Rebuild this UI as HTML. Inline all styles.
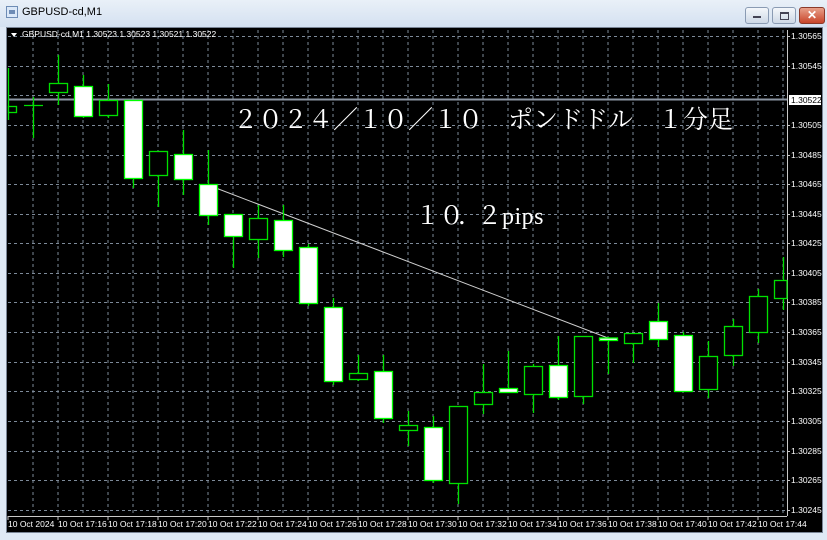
<!DOCTYPE html>
<html><head><meta charset="utf-8"><style>
body{margin:0;width:827px;height:540px;overflow:hidden;background:#dfe9f5;font-family:"Liberation Sans",sans-serif}
.t{position:absolute;left:0;top:0;width:827px;height:27px;background:linear-gradient(#e9f0f8,#d4e1f1)}
.btn{position:absolute;top:7px;height:15px;border:1px solid #8a9bb3;border-radius:3px;background:linear-gradient(#f4f7fb,#cdd8e6)}
</style></head><body>
<div class="t">
<svg style="position:absolute;left:6px;top:6px" width="12" height="12"><rect x="0.5" y="0.5" width="11" height="11" fill="#dbe8f8" stroke="#6e8cb5"/><rect x="3" y="4" width="6" height="4" fill="#6e8cb5"/></svg>
<div style="position:absolute;left:22px;top:6px;font-size:11px;color:#000">GBPUSD-cd,M1</div>
<div class="btn" style="left:745px;width:22px"><div style="position:absolute;left:7px;top:8px;width:8px;height:2px;background:#445"></div></div>
<div class="btn" style="left:772px;width:22px"><div style="position:absolute;left:7px;top:4px;width:7px;height:5px;border:1px solid #445;border-top-width:2px"></div></div>
<div class="btn" style="left:799px;width:24px;background:linear-gradient(#e8a08a,#c8452a);border-color:#8b3a2a"><div style="position:absolute;left:7px;top:0px;color:#fff;font-size:12px;font-weight:bold">✕</div></div>
</div>
<svg style="position:absolute;left:0;top:0" width="827" height="540" font-family="Liberation Sans, sans-serif">
<rect x="6" y="27" width="817" height="506" fill="#000"/>
<rect x="6.5" y="27.5" width="816" height="505" fill="none" stroke="#7a8596"/>
<g stroke="#7d8a99" stroke-width="1" stroke-dasharray="3,3">
<path d="M33 30V515M58 30V515M83 30V515M108 30V515M133 30V515M158 30V515M183 30V515M208 30V515M233 30V515M258 30V515M283 30V515M308 30V515M333 30V515M358 30V515M383 30V515M408 30V515M433 30V515M458 30V515M483 30V515M508 30V515M533 30V515M558 30V515M583 30V515M608 30V515M633 30V515M658 30V515M683 30V515M708 30V515M733 30V515M758 30V515M783 30V515"/>
<path d="M8 36.5H787M8 66.5H787M8 95.5H787M8 125.5H787M8 155.5H787M8 184.5H787M8 214.5H787M8 243.5H787M8 273.5H787M8 302.5H787M8 332.5H787M8 362.5H787M8 391.5H787M8 421.5H787M8 451.5H787M8 480.5H787M8 510.5H787"/>
</g>
<path d="M8 99.5H787" stroke="#8c96a3" stroke-width="2"/>
<path d="M787.5 30V516M8 516.5H787" stroke="#c8c8c8"/>
<g stroke="#c8c8c8"><path d="M8 516v4M58 516v4M108 516v4M158 516v4M208 516v4M258 516v4M308 516v4M358 516v4M408 516v4M458 516v4M508 516v4M558 516v4M608 516v4M658 516v4M708 516v4M758 516v4M787 36.5h3M787 66.5h3M787 125.5h3M787 155.5h3M787 184.5h3M787 214.5h3M787 243.5h3M787 273.5h3M787 302.5h3M787 332.5h3M787 362.5h3M787 391.5h3M787 421.5h3M787 451.5h3M787 480.5h3M787 510.5h3"/></g>
<line x1="208" y1="185" x2="608" y2="338" stroke="#d0d0d0" stroke-width="1"/>
<g stroke="#00e000" stroke-width="1.3">
<path d="M8.5 68V120M33.5 97V138M58.5 55V105M83.5 75V118M108.5 84V118M133.5 100V188M158.5 151V207M183.5 130V195M208.5 150V225M233.5 214V268M258.5 205V258M283.5 205V257M308.5 244V306M333.5 298V385M358.5 355V381M383.5 355V423M408.5 411V446M433.5 416V483M458.5 406V504M483.5 364V414M508.5 351V392M533.5 364V413M558.5 336V400M583.5 336V404M608.5 337V374M633.5 333V363M658.5 303V347M683.5 332V391M708.5 341V398M733.5 319V366M758.5 289V343M783.5 257V310"/>
<path d="M24 105.5H43"/>
</g>
<g stroke="#00e000" stroke-width="1.3" fill="#000">
<rect x="8.5" y="106.5" width="8" height="6"/>
<rect x="49.5" y="83.5" width="18" height="9"/>
<rect x="99.5" y="100.5" width="18" height="15"/>
<rect x="149.5" y="151.5" width="18" height="24"/>
<rect x="249.5" y="218.5" width="18" height="21"/>
<rect x="349.5" y="373.5" width="18" height="6"/>
<rect x="399.5" y="425.5" width="18" height="5"/>
<rect x="449.5" y="406.5" width="18" height="77"/>
<rect x="474.5" y="392.5" width="18" height="12"/>
<rect x="524.5" y="366.5" width="18" height="28"/>
<rect x="574.5" y="336.5" width="18" height="60"/>
<rect x="624.5" y="333.5" width="18" height="10"/>
<rect x="699.5" y="356.5" width="18" height="33"/>
<rect x="724.5" y="326.5" width="18" height="29"/>
<rect x="749.5" y="296.5" width="18" height="36"/>
<rect x="774.5" y="280.5" width="12.5" height="18"/>
</g>
<g stroke="#00ff00" stroke-width="1.3" fill="#fff">
<rect x="74.5" y="86.5" width="18" height="30"/>
<rect x="124.5" y="100.5" width="18" height="78"/>
<rect x="174.5" y="154.5" width="18" height="25"/>
<rect x="199.5" y="184.5" width="18" height="31"/>
<rect x="224.5" y="214.5" width="18" height="22"/>
<rect x="274.5" y="220.5" width="18" height="30"/>
<rect x="299.5" y="247.5" width="18" height="56"/>
<rect x="324.5" y="307.5" width="18" height="74"/>
<rect x="374.5" y="371.5" width="18" height="47"/>
<rect x="424.5" y="427.5" width="18" height="53"/>
<rect x="499.5" y="388.5" width="18" height="4"/>
<rect x="549.5" y="365.5" width="18" height="32"/>
<rect x="599.5" y="338" width="18" height="2.5"/>
<rect x="649.5" y="321.5" width="18" height="18"/>
<rect x="674.5" y="335.5" width="18" height="56"/>
</g>
<g fill="#fff" font-size="8.5">
<text x="22" y="37">GBPUSD-cd,M1  1.30523 1.30523 1.30521 1.30522</text>
<path d="M11 33h6l-3 4z" fill="#fff"/>
<text x="791" y="39">1.30565</text><text x="791" y="69">1.30545</text><text x="791" y="128">1.30505</text><text x="791" y="158">1.30485</text><text x="791" y="187">1.30465</text><text x="791" y="217">1.30445</text><text x="791" y="246">1.30425</text><text x="791" y="276">1.30405</text><text x="791" y="305">1.30385</text><text x="791" y="335">1.30365</text><text x="791" y="365">1.30345</text><text x="791" y="394">1.30325</text><text x="791" y="424">1.30305</text><text x="791" y="454">1.30285</text><text x="791" y="483">1.30265</text><text x="791" y="513">1.30245</text>
<rect x="789" y="95" width="32" height="10" fill="#fff"/>
<text x="791" y="103" fill="#000">1.30522</text>
<text x="8" y="527">10 Oct 2024</text><text x="58" y="527">10 Oct 17:16</text><text x="108" y="527">10 Oct 17:18</text><text x="158" y="527">10 Oct 17:20</text><text x="208" y="527">10 Oct 17:22</text><text x="258" y="527">10 Oct 17:24</text><text x="308" y="527">10 Oct 17:26</text><text x="358" y="527">10 Oct 17:28</text><text x="408" y="527">10 Oct 17:30</text><text x="458" y="527">10 Oct 17:32</text><text x="508" y="527">10 Oct 17:34</text><text x="558" y="527">10 Oct 17:36</text><text x="608" y="527">10 Oct 17:38</text><text x="658" y="527">10 Oct 17:40</text><text x="708" y="527">10 Oct 17:42</text><text x="758" y="527">10 Oct 17:44</text>
</g>
<g fill="#fff" font-family="Liberation Serif, Noto Serif CJK SC, serif" font-size="25">
<text x="233" y="128">２０２４／１０／１０　ポンドドル　１分足</text>
<text x="415" y="224">１</text><text x="439" y="224">０</text><text x="458" y="224">．</text><text x="477" y="224">２</text>
<text x="502" y="224" font-size="24" letter-spacing="0.5">pips</text>
</g>
</svg>
</body></html>
